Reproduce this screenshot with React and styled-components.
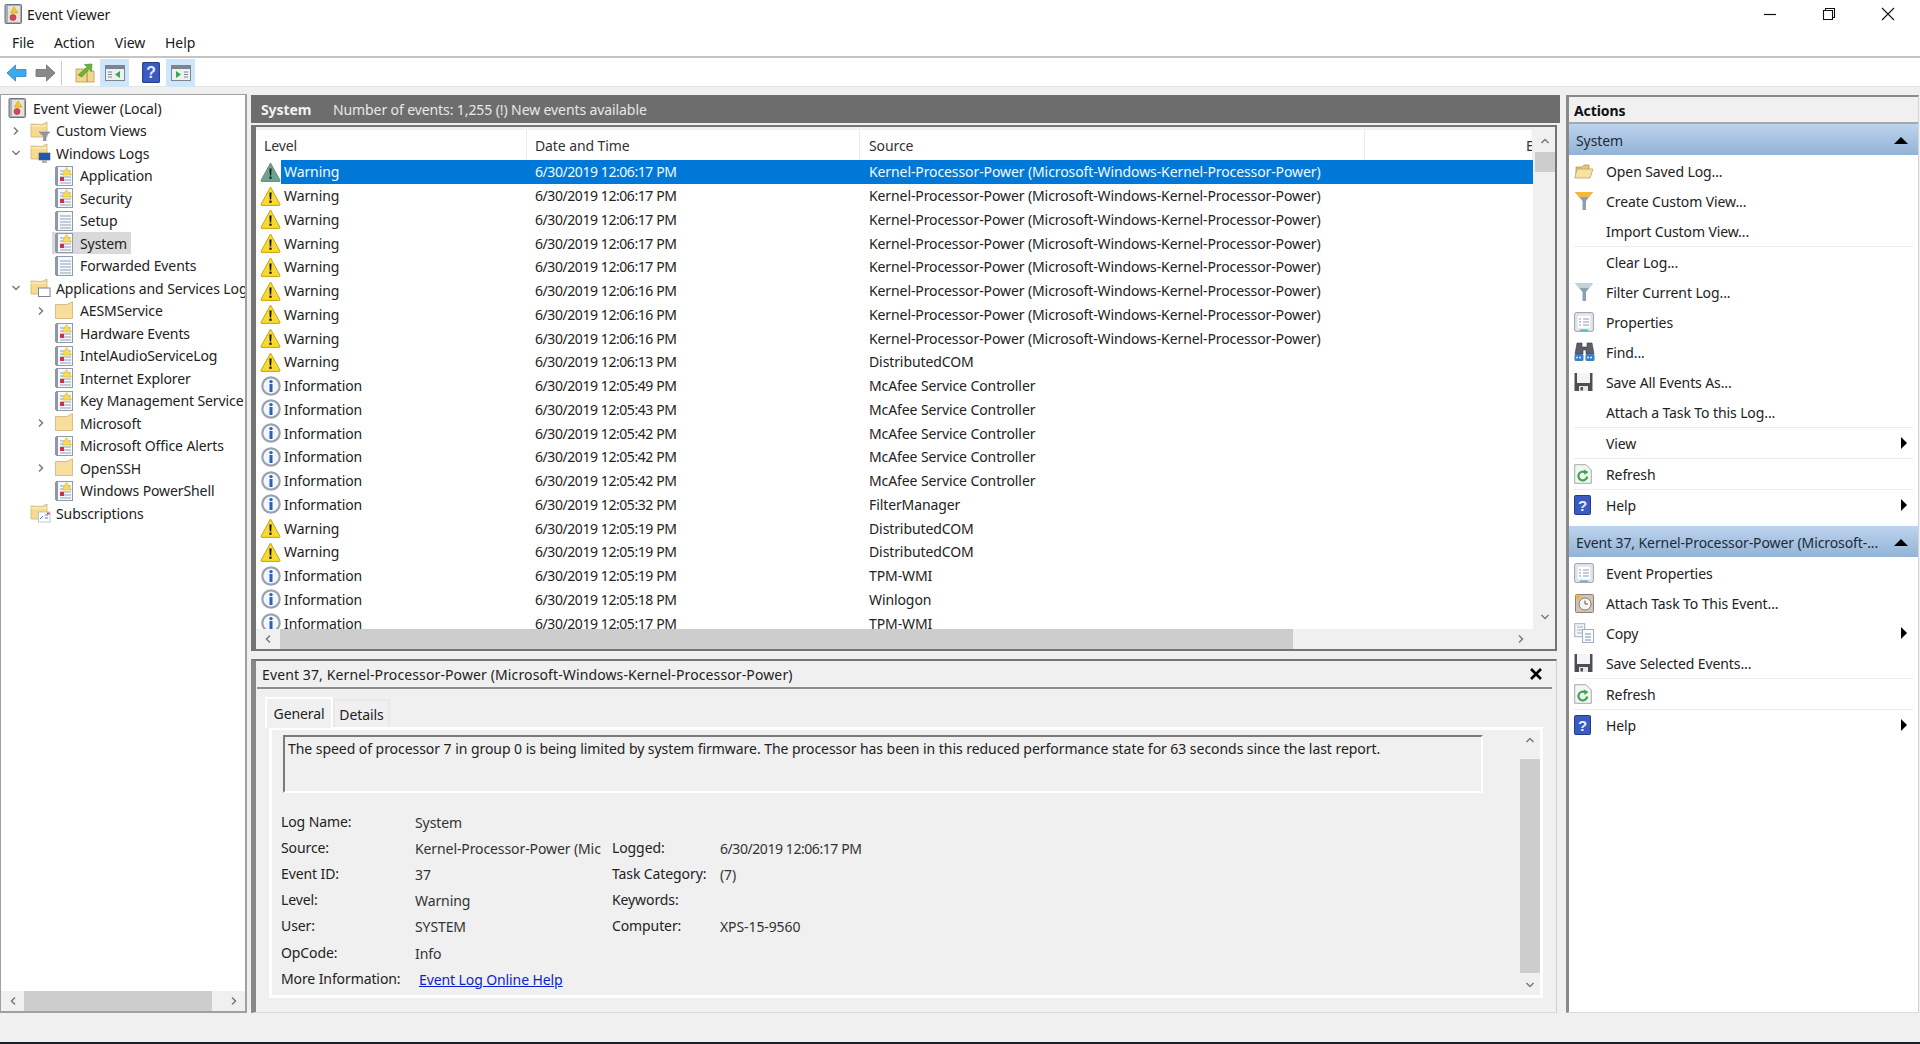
import React from 'react';
import styled, { createGlobalStyle } from 'styled-components';

const GlobalStyle = createGlobalStyle`
  html, body { margin: 0; padding: 0; background: #f0f0f0; }
  body { font-family: "Noto Sans", "Open Sans", sans-serif; font-size: 14px; letter-spacing: -0.1px; color: #222; overflow: hidden; }
  * { box-sizing: border-box; }
`;

const Window = styled.div`
  width: 1920px;
  height: 1044px;
  display: flex;
  flex-direction: column;
  background: #f0f0f0;
  border-bottom: 2px solid #1a2024;
`;

/* title, menu, toolbar */
const TitleBar = styled.div`
  height: 28px;
  background: #fff;
  display: flex;
  align-items: center;
  padding: 0 3px 0 4px;
  color: #1a1a1a;
`;
const TitleText = styled.span`
  flex: 1;
  margin-left: 5px;
`;
const WinButton = styled.div`
  width: 59px;
  height: 28px;
  display: flex;
  align-items: center;
  justify-content: center;
`;
const MenuBar = styled.div`
  height: 30px;
  background: #fff;
  border-bottom: 2px solid #c4c4c4;
  display: flex;
  align-items: center;
  padding-left: 12px;
  gap: 20px;
`;
const MenuItem = styled.span`
  color: #1a1a1a;
`;
const Toolbar = styled.div`
  height: 29px;
  background: #fff;
  border-bottom: 1px solid #e4e4e4;
  display: flex;
  align-items: center;
  padding: 1px 0 0 6px;
`;
const ToolButton = styled.div`
  width: ${p => p.$w || 29}px;
  height: 28px;
  display: flex;
  align-items: center;
  justify-content: center;
  margin-left: ${p => p.$ml || 0}px;
  background: ${p => (p.$on ? '#cde6fa' : 'transparent')};
`;
const ToolSep = styled.div`
  width: 1px;
  height: 24px;
  background: #c8c8c8;
  margin-left: 5px;
`;

const Main = styled.div`
  flex: 1;
  min-height: 0;
  display: flex;
  padding-top: 7px;
`;

/* scrollbars */
const HScroll = styled.div`
  height: 20px;
  flex: none;
  display: flex;
  align-items: center;
  background: #f0f0f0;
`;
const VScroll = styled.div`
  width: 20px;
  flex: none;
  display: flex;
  flex-direction: column;
  align-items: center;
  background: #f0f0f0;
`;
const ArrowBox = styled.div`
  flex: none;
  width: ${p => p.$w || 20}px;
  height: ${p => p.$h || 20}px;
  padding-top: ${p => p.$top || 0}px;
  display: flex;
  align-items: ${p => (p.$top ? 'flex-start' : 'center')};
  justify-content: center;
`;
const HThumb = styled.div`
  height: 20px;
  width: ${p => p.$w}px;
  background: #cdcdcd;
  flex: none;
`;
const VThumb = styled.div`
  width: 20px;
  height: ${p => p.$h}px;
  background: #cdcdcd;
  flex: none;
`;
const Spacer = styled.div`
  flex: 1;
`;

/* tree */
const TreePane = styled.div`
  width: 247px;
  flex: none;
  background: #fff;
  border: 1px solid #a0a0a0;
  border-width: 1px 2px 2px 1px;
  display: flex;
  flex-direction: column;
`;
const TreeBody = styled.div`
  flex: 1;
  padding-top: 2px;
  overflow: hidden;
`;
const TreeRow = styled.div`
  height: 22.5px;
  display: flex;
  align-items: center;
  padding-left: ${p => [4, 7, 32][p.$level]}px;
  white-space: nowrap;
`;
const ChevSlot = styled.div`
  width: 19px;
  flex: none;
  display: flex;
  justify-content: flex-start;
  padding-left: 3px;
`;
const TreeLabel = styled.div`
  height: 22px;
  display: flex;
  align-items: center;
  gap: ${p => [7, 5, 7][p.$level]}px;
  padding: 0 4px 0 3px;
  background: ${p => (p.$on ? '#d9d9d9' : 'transparent')};
  color: #222;
`;

/* center */
const Center = styled.div`
  width: 1309px;
  margin-left: 4px;
  flex: none;
  display: flex;
  flex-direction: column;
`;
const LogHeader = styled.div`
  height: 28px;
  margin-top: 1px;
  background: #6d6d6d;
  color: #e8e8e8;
  display: flex;
  align-items: center;
  padding-left: 10px;
`;
const LogTitle = styled.b`
  font-weight: 700;
  color: #f2f2f2;
  width: 72px;
`;
const ListPane = styled.div`
  width: 1306px;
  height: 526px;
  margin-top: 2px;
  flex: none;
  border: 2px solid #747474;
  border-left-width: 5px;
  padding-top: 3px;
  background: #f0f0f0;
  display: flex;
  flex-direction: column;
`;
const ListMain = styled.div`
  flex: 1;
  min-height: 0;
  display: flex;
  gap: 2px;
`;
const ListTable = styled.div`
  width: 1277px;
  background: #fff;
  overflow: hidden;
`;
const HeaderRow = styled.div`
  height: 30px;
  display: grid;
  grid-template-columns: 271px 333px 505px 168px;
  color: #333;
`;
const HeaderCell = styled.div`
  padding-left: ${p => p.$pad}px;
  border-right: 1px solid #ececec;
  display: flex;
  align-items: center;
  overflow: hidden;
  white-space: nowrap;
`;
const EventRow = styled.div`
  height: 23.75px;
  display: grid;
  grid-template-columns: 25px 246px 333px 505px 168px;
  align-items: stretch;
  color: #222;
`;
const IconCell = styled.div`
  display: flex;
  align-items: center;
  justify-content: center;
  padding-left: 4px;
`;
const Cell = styled.div`
  padding-left: ${p => p.$pad}px;
  display: flex;
  align-items: center;
  white-space: nowrap;
  background: ${p => (p.$sel ? '#0078d7' : 'transparent')};
  color: ${p => (p.$sel ? '#f4faff' : 'inherit')};
`;
const DateText = styled.span`
  letter-spacing: -0.43px;
`;

/* detail */
const DetailPane = styled.div`
  width: 1306px;
  flex: 1;
  margin-top: 8px;
  min-height: 0;
  border-top: 2px solid #747474;
  border-left: 5px solid #888;
  border-right: 1px solid #d0d0d0;
  border-bottom: 1px solid #dcdcdc;
  display: flex;
  flex-direction: column;
`;
const DetailTitle = styled.div`
  height: 28px;
  flex: none;
  margin: 0 4px 0 1px;
  border-bottom: 2px solid #8e8e8e;
  display: flex;
  align-items: center;
  justify-content: space-between;
  padding: 0 10px 0 5px;
  letter-spacing: 0.12px;
`;
const Tabs = styled.div`
  display: flex;
  align-items: flex-end;
  height: 30px;
  margin-top: 8px;
  padding-left: 9px;
  flex: none;
`;
const Tab = styled.div`
  height: ${p => (p.$on ? 31 : 28)}px;
  width: ${p => (p.$on ? 68 : 57)}px;
  margin-bottom: ${p => (p.$on ? -1 : 0)}px;
  display: flex;
  align-items: center;
  justify-content: center;
  border: 2px solid ${p => (p.$on ? '#fff' : '#e8e8e8')};
  border-bottom: none;
  background: #f0f0f0;
  position: relative;
  z-index: 1;
  color: #222;
`;
const TabPanel = styled.div`
  width: 1274px;
  height: 271px;
  margin-left: 13px;
  border: 3px solid #fff;
  display: flex;
  flex: none;
`;
const PanelBody = styled.div`
  width: 1248px;
  padding: 5px 0 0 11px;
`;
const MessageBox = styled.div`
  width: 1200px;
  height: 58px;
  border: 2px solid #fff;
  border-top-color: #7a7a7a;
  border-left-color: #7a7a7a;
  padding: 2px 0 0 3px;
  line-height: 20px;
  letter-spacing: -0.05px;
  white-space: nowrap;
  overflow: hidden;
`;
const Fields = styled.div`
  margin: 15px 0 0 -2px;
  display: grid;
  grid-template-columns: 134px 197px 108px 1fr;
  grid-auto-rows: 26.2px;
  align-items: center;
  white-space: nowrap;
`;
const FieldLabel = styled.div`
  color: #222;
`;
const FieldValue = styled.div`
  padding-top: 2px;
  color: #333;
`;
const HelpLink = styled.a`
  color: #0a1fd0;
  text-decoration: underline;
  margin-left: 4px;
`;

/* actions */
const ActionsPane = styled.div`
  width: 353px;
  margin-left: 6px;
  margin-top: 1px;
  flex: none;
  background: #fff;
  border-top: 2px solid #8a8a8a;
  border-left: 3px solid #8a8a8a;
  border-right: 1px solid #d4d4d4;
  border-bottom: 1px solid #dcdcdc;
`;
const ActionsTitle = styled.div`
  height: 27px;
  background: #f0f0f0;
  border-bottom: 2px solid #a8a8a8;
  display: flex;
  align-items: center;
  padding: 2px 0 0 5px;
  font-weight: 700;
  color: #111;
`;
const SectionHead = styled.div`
  height: 31px;
  background: linear-gradient(#bdd4ee, #92b3d7);
  display: flex;
  align-items: center;
  justify-content: space-between;
  padding: 2px 10px 0 7px;
  color: #1f2a36;
  white-space: nowrap;
`;
const SectionList = styled.div`
  padding: 1px 0 6px;
`;
const ActionRow = styled.div`
  height: 30px;
  display: flex;
  align-items: center;
  color: #222;
  padding-right: 11px;
`;
const ActionIcon = styled.div`
  width: 37px;
  padding-left: 5px;
  flex: none;
  display: flex;
  align-items: center;
`;
const ActionLabel = styled.span`
  flex: 1;
`;
const ActionSep = styled.div`
  height: 1px;
  margin: 0 5px;
  background: #ececec;
`;
const SideArrow = styled.div`
  width: 0;
  height: 0;
  border-left: 6px solid #000;
  border-top: 6px solid transparent;
  border-bottom: 6px solid transparent;
`;
const UpArrow = styled.div`
  width: 0;
  height: 0;
  border-left: 7px solid transparent;
  border-right: 7px solid transparent;
  border-bottom: 7px solid #000;
`;

const StatusBar = styled.div`
  height: 29px;
  flex: none;
  background: #f0f0f0;
`;

/* icons */
const Chev = ({ dir = 'right', size = 10, color = '#7a7a7a', w = 1.5 }) => {
  const pts = {
    right: '3,1.5 6.5,5 3,8.5',
    left: '7,1.5 3.5,5 7,8.5',
    up: '1.5,7 5,3.5 8.5,7',
    down: '1.5,3 5,6.5 8.5,3',
  }[dir];
  return (
    <svg width={size} height={size} viewBox="0 0 10 10">
      <polyline points={pts} fill="none" stroke={color} strokeWidth={w} />
    </svg>
  );
};

const WarnIcon = ({ sel }) => (
  <svg width="21" height="20" viewBox="0 0 21 20">
    <path d="M10.5 1 L20 18.4 Q20.2 19.4 19 19.4 L2 19.4 Q.8 19.4 1 18.4 Z" fill={sel ? '#6fa38f' : '#f8d92e'} stroke={sel ? '#5a8f7c' : '#c9a20f'} strokeWidth="1" />
    <path d="M9.4 6.5h2.2l-.4 7h-1.4z" fill={sel ? '#123' : '#111'} />
    <rect x="9.4" y="14.6" width="2.2" height="2.2" fill={sel ? '#123' : '#111'} />
  </svg>
);

const InfoIcon = () => (
  <svg width="20" height="20" viewBox="0 0 20 20">
    <circle cx="10" cy="10" r="8.7" fill="#f2f5fa" stroke="#9aa2b0" strokeWidth="2.2" />
    <circle cx="10" cy="5.6" r="1.7" fill="#2a62b8" />
    <rect x="8.5" y="8" width="3" height="8" fill="#2a62b8" />
  </svg>
);

const LogIcon = ({ plain }) => (
  <svg width="18" height="20" viewBox="0 0 18 20">
    <rect x="1.5" y=".5" width="16" height="19" fill="#f6f8fb" stroke="#8f9aab" />
    <rect x="0" y="1" width="3" height="18" fill="#8d98a8" />
    <path d="M5 5h11M5 8h11M5 11h11M5 14h11M5 17h11" stroke="#8fa2bd" strokeWidth="1" />
    {!plain && <path d="M11.5 1.5 L16.5 9 L7 9 Z" fill="#f9dc55" stroke="#d8b52a" strokeWidth=".6" />}
    {!plain && <rect x="5" y="11" width="4" height="4" fill="#c8324a" />}
  </svg>
);

const RootIcon = () => (
  <svg width="18" height="20" viewBox="0 0 18 20">
    <rect x="1" y=".5" width="16.5" height="19" rx="1" fill="#a6adb8" stroke="#6b7482" />
    <rect x="4" y="2" width="12" height="16" fill="#e9e3d4" />
    <path d="M10 3 L14 9 L6.5 9 Z" fill="#f7c733" stroke="#b98f1a" strokeWidth=".5" />
    <circle cx="9" cy="13.5" r="3" fill="#d6455f" stroke="#a12a40" strokeWidth=".6" />
  </svg>
);

const FolderIcon = ({ overlay }) => (
  <svg width="21" height="20" viewBox="0 0 21 20">
    <path d="M1 3 L1 16 L17 16 L17 1 L12 3.5 Z" fill="#f6da92" stroke="#cdb477" strokeWidth=".8" />
    <path d="M1 5 H17" stroke="#fff1c8" strokeWidth="1" />
    {overlay === 'filter' && <path d="M9 11 H20 L16 15 V20 H13.5 V15 Z" fill="#8d9aa8" stroke="#6f7b88" strokeWidth=".5" />}
    {overlay === 'pc' && (
      <g>
        <rect x="9" y="10" width="11" height="7" fill="#1f56b4" stroke="#4b5a72" strokeWidth=".6" />
        <rect x="12" y="17" width="5" height="3" fill="#a7b0bc" />
      </g>
    )}
    {overlay === 'window' && <rect x="8.5" y="10" width="11.5" height="8.5" fill="#fff" stroke="#7b8696" strokeWidth="1" />}
    {overlay === 'subs' && (
      <g>
        <rect x="8.5" y="9" width="11.5" height="10" fill="#fff" stroke="#b0b8c4" strokeWidth=".8" />
        <path d="M10 16l3-3M15 12h3M15 15h3" stroke="#3c80d0" strokeWidth="1" />
        <rect x="17" y="9.5" width="2.5" height="2" fill="#d8453c" />
      </g>
    )}
  </svg>
);

const PlainFolder = () => (
  <svg width="18" height="20" viewBox="0 0 18 20">
    <path d="M.5 3.5 L.5 17.5 L17.5 17.5 L17.5 .5 L12 3.5 Z" fill="#f8de9c" stroke="#cdb477" strokeWidth=".8" />
  </svg>
);

const ArrowIcon = ({ flip, color, edge }) => (
  <svg width="21" height="18" viewBox="0 0 21 18">
    <path
      d={flip ? 'M20 9 L11.5 1 V5.5 H1 V12.5 H11.5 V17 Z' : 'M1 9 L9.5 1 V5.5 H20 V12.5 H9.5 V17 Z'}
      fill={color}
      stroke={edge}
      strokeWidth=".8"
    />
  </svg>
);

const UpFolderIcon = () => (
  <svg width="20" height="20" viewBox="0 0 20 20">
    <path d="M1 6 H12 V19 H1 Z M12 8 H19 V19 H12 Z" fill="#f3d78a" stroke="#b59a54" strokeWidth=".8" />
    <path d="M3 12 L12 4 L9.5 1.5 L17 1 L16.5 8.5 L14 6 L7 14 Z" fill="#6ab43a" stroke="#4d8a26" strokeWidth=".6" />
  </svg>
);

const PanelIcon = ({ right }) => (
  <svg width="20" height="16" viewBox="0 0 20 16">
    <rect x=".5" y=".5" width="19" height="15" fill="#eef1f4" stroke="#7a8694" />
    <rect x="1" y="1" width="18" height="3" fill="#7a8694" />
    {right ? (
      <g>
        <path d="M5 6 L10 9.5 L5 13 Z" fill="#39a845" />
        <path d="M13 7h4M13 9.5h4M13 12h4" stroke="#7a8694" strokeWidth="1" />
      </g>
    ) : (
      <g>
        <path d="M3 7h4M3 9.5h4M3 12h4" stroke="#7a8694" strokeWidth="1" />
        <path d="M15 6 L10 9.5 L15 13 Z" fill="#39a845" />
      </g>
    )}
  </svg>
);

const HelpIcon = ({ h = 20, w = 17 }) => (
  <svg width={w} height={h} viewBox="0 0 17 20">
    <rect x=".5" y=".5" width="16" height="19" rx="1" fill="#3a5cc0" stroke="#24398a" />
    <text x="8.5" y="15.5" textAnchor="middle" fontSize="15" fontWeight="700" fontFamily="Liberation Sans, sans-serif" fill="#e8ecff">?</text>
  </svg>
);

const OpenFolderIcon = () => (
  <svg width="20" height="18" viewBox="0 0 20 18">
    <path d="M2 5 H8 L10 3 H15 V14 H2 Z" fill="#e8c878" stroke="#a68f55" strokeWidth=".7" />
    <path d="M.8 16 L3 7 H19 L16 16 Z" fill="#f8e2a0" stroke="#b39a5c" strokeWidth=".7" />
  </svg>
);

const FunnelIcon = ({ fill = '#8da0b2', top = '#c4d0da' }) => (
  <svg width="20" height="20" viewBox="0 0 20 20">
    <path d="M1 1 H19 L12 10 V19 H8.5 V10 Z" fill={fill} />
    <path d="M1 1 H19 L15 6 H5 Z" fill={top} />
  </svg>
);

const SheetIcon = () => (
  <svg width="20" height="20" viewBox="0 0 20 20">
    <rect x=".7" y=".7" width="18.6" height="18.6" rx="1.5" fill="#eef0f3" stroke="#8d96a3" />
    <rect x="3" y="3" width="14" height="14" fill="#fff" stroke="#c4cad2" strokeWidth=".7" />
    <path d="M5 7h2M9 7h6M5 10h2M9 10h6M5 13h2M9 13h6" stroke="#8d9bb0" strokeWidth="1" />
    <rect x="6" y="17.5" width="8" height="1.4" fill="#46b0c4" />
  </svg>
);

const BinocularsIcon = () => (
  <svg width="21" height="20" viewBox="0 0 21 20">
    <path d="M3 1 h5 v4 h5 v-4 h5 l2 11 h-8 v-4 h-3 v4 h-8 z" fill="#5a5f68" stroke="#3a3e45" strokeWidth=".6" />
    <rect x=".5" y="12" width="9" height="7" rx="1.5" fill="#3d7fc0" />
    <rect x="11.5" y="12" width="9" height="7" rx="1.5" fill="#3d7fc0" />
    <path d="M2 15.5h6M13 15.5h6" stroke="#dceaf8" strokeWidth="1.5" strokeDasharray="2 1" />
  </svg>
);

const SaveIcon = () => (
  <svg width="19" height="20" viewBox="0 0 19 20">
    <path d="M.5 1 H18.5 V19 H.5 Z" fill="#4c5055" />
    <rect x="3" y="1" width="13" height="10" fill="#f4f4f4" />
    <rect x="5" y="14" width="9" height="5" fill="#e8e8e8" />
    <rect x="6.5" y="15" width="2.5" height="3.5" fill="#4c5055" />
  </svg>
);

const RefreshIcon = () => (
  <svg width="18" height="20" viewBox="0 0 18 20">
    <path d="M.7.7 H12 L17.3 6 V19.3 H.7 Z" fill="#f3f5f4" stroke="#a3aaa6" />
    <path d="M13.2 12.5 A4.4 4.4 0 1 1 11.5 8.5" fill="none" stroke="#3aa84a" strokeWidth="2.2" />
    <path d="M10 5.5 L14.5 8 L10.5 11 Z" fill="#3aa84a" />
  </svg>
);

const ClockIcon = () => (
  <svg width="20" height="20" viewBox="0 0 20 20">
    <rect x="1.5" y="1.5" width="18" height="18" rx="1" fill="#cfc4b6" stroke="#8b8073" />
    <circle cx="11" cy="11" r="6" fill="#f6f6f4" stroke="#8b7d6d" />
    <path d="M11 7.5 V11 H14" fill="none" stroke="#555" strokeWidth="1" />
    <path d="M4 0 L5.2 3 L8 4 L5.2 5 L4 8 L2.8 5 L0 4 L2.8 3 Z" fill="#f6b420" />
  </svg>
);

const CopyIcon = () => (
  <svg width="20" height="20" viewBox="0 0 20 20">
    <rect x=".7" y=".7" width="10" height="13" fill="#f3f5f8" stroke="#a3adbb" />
    <path d="M3 4h6M3 7h6M3 10h6" stroke="#9eb0ca" />
    <rect x="8.5" y="6.5" width="11" height="13" fill="#fbfcfd" stroke="#a3adbb" />
    <path d="M11 11h6M11 14h6M11 17h6" stroke="#6f90c0" />
  </svg>
);

const treeItems = [
  { level: 0, icon: <RootIcon />, text: 'Event Viewer (Local)' },
  { level: 1, chev: 'right', icon: <FolderIcon overlay="filter" />, text: 'Custom Views' },
  { level: 1, chev: 'down', icon: <FolderIcon overlay="pc" />, text: 'Windows Logs' },
  { level: 2, icon: <LogIcon />, text: 'Application' },
  { level: 2, icon: <LogIcon />, text: 'Security' },
  { level: 2, icon: <LogIcon plain />, text: 'Setup' },
  { level: 2, icon: <LogIcon />, text: 'System', on: true },
  { level: 2, icon: <LogIcon plain />, text: 'Forwarded Events' },
  { level: 1, chev: 'down', icon: <FolderIcon overlay="window" />, text: 'Applications and Services Logs' },
  { level: 2, chev: 'right', icon: <PlainFolder />, text: 'AESMService' },
  { level: 2, icon: <LogIcon />, text: 'Hardware Events' },
  { level: 2, icon: <LogIcon />, text: 'IntelAudioServiceLog' },
  { level: 2, icon: <LogIcon />, text: 'Internet Explorer' },
  { level: 2, icon: <LogIcon />, text: 'Key Management Service' },
  { level: 2, chev: 'right', icon: <PlainFolder />, text: 'Microsoft' },
  { level: 2, icon: <LogIcon />, text: 'Microsoft Office Alerts' },
  { level: 2, chev: 'right', icon: <PlainFolder />, text: 'OpenSSH' },
  { level: 2, icon: <LogIcon />, text: 'Windows PowerShell' },
  { level: 1, icon: <FolderIcon overlay="subs" />, text: 'Subscriptions' },
];

const KPP = 'Kernel-Processor-Power (Microsoft-Windows-Kernel-Processor-Power)';
const MCA = 'McAfee Service Controller';
const events = [
  ['W', '12:06:17', KPP],
  ['W', '12:06:17', KPP],
  ['W', '12:06:17', KPP],
  ['W', '12:06:17', KPP],
  ['W', '12:06:17', KPP],
  ['W', '12:06:16', KPP],
  ['W', '12:06:16', KPP],
  ['W', '12:06:16', KPP],
  ['W', '12:06:13', 'DistributedCOM'],
  ['I', '12:05:49', MCA],
  ['I', '12:05:43', MCA],
  ['I', '12:05:42', MCA],
  ['I', '12:05:42', MCA],
  ['I', '12:05:42', MCA],
  ['I', '12:05:32', 'FilterManager'],
  ['W', '12:05:19', 'DistributedCOM'],
  ['W', '12:05:19', 'DistributedCOM'],
  ['I', '12:05:19', 'TPM-WMI'],
  ['I', '12:05:18', 'Winlogon'],
  ['I', '12:05:17', 'TPM-WMI'],
];

const logActions = [
  { icon: <OpenFolderIcon />, text: 'Open Saved Log...' },
  { icon: <FunnelIcon fill="#8da0b2" top="#f6b83a" />, text: 'Create Custom View...' },
  { text: 'Import Custom View...' },
  { sep: true },
  { text: 'Clear Log...' },
  { icon: <FunnelIcon />, text: 'Filter Current Log...' },
  { icon: <SheetIcon />, text: 'Properties' },
  { icon: <BinocularsIcon />, text: 'Find...' },
  { icon: <SaveIcon />, text: 'Save All Events As...' },
  { text: 'Attach a Task To this Log...' },
  { sep: true },
  { text: 'View', arrow: true },
  { sep: true },
  { icon: <RefreshIcon />, text: 'Refresh' },
  { sep: true },
  { icon: <HelpIcon />, text: 'Help', arrow: true },
];

const eventActions = [
  { icon: <SheetIcon />, text: 'Event Properties' },
  { icon: <ClockIcon />, text: 'Attach Task To This Event...' },
  { icon: <CopyIcon />, text: 'Copy', arrow: true },
  { icon: <SaveIcon />, text: 'Save Selected Events...' },
  { sep: true },
  { icon: <RefreshIcon />, text: 'Refresh' },
  { sep: true },
  { icon: <HelpIcon />, text: 'Help', arrow: true },
];

const ActionSection = ({ title, items }) => (
  <>
    <SectionHead>
      <span>{title}</span>
      <UpArrow />
    </SectionHead>
    <SectionList>
      {items.map((a, i) =>
        a.sep ? (
          <ActionSep key={i} />
        ) : (
          <ActionRow key={i}>
            <ActionIcon>{a.icon}</ActionIcon>
            <ActionLabel>{a.text}</ActionLabel>
            {a.arrow && <SideArrow />}
          </ActionRow>
        )
      )}
    </SectionList>
  </>
);

const App = () => (
  <Window>
    <GlobalStyle />
    <TitleBar>
      <RootIcon />
      <TitleText>Event Viewer</TitleText>
      <WinButton>
        <svg width="14" height="14" viewBox="0 0 14 14"><path d="M1 7.5H13" stroke="#111" strokeWidth="1.2" /></svg>
      </WinButton>
      <WinButton>
        <svg width="14" height="14" viewBox="0 0 14 14"><path d="M1.5 3.5H10.5V12.5H1.5Z M3.5 3.5V1.5H12.5V10.5H10.5" fill="none" stroke="#111" strokeWidth="1.1" /></svg>
      </WinButton>
      <WinButton>
        <svg width="14" height="14" viewBox="0 0 14 14"><path d="M1 1L13 13M13 1L1 13" stroke="#111" strokeWidth="1.1" /></svg>
      </WinButton>
    </TitleBar>
    <MenuBar>
      <MenuItem>File</MenuItem>
      <MenuItem>Action</MenuItem>
      <MenuItem>View</MenuItem>
      <MenuItem>Help</MenuItem>
    </MenuBar>
    <Toolbar>
      <ArrowIcon color="#3fa8ea" edge="#2a86c8" />
      <ToolButton $w={21} $ml={8}><ArrowIcon flip color="#8a8a8a" edge="#6e6e6e" /></ToolButton>
      <ToolSep />
      <ToolButton $w={20} $ml={13}><UpFolderIcon /></ToolButton>
      <ToolButton $on $ml={5}><PanelIcon /></ToolButton>
      <ToolButton $w={19} $ml={12}><HelpIcon h={21} w={18} /></ToolButton>
      <ToolButton $on $ml={6}><PanelIcon right /></ToolButton>
    </Toolbar>

    <Main>
      <TreePane>
        <TreeBody>
          {treeItems.map(t => (
            <TreeRow key={t.text} $level={t.level}>
              {t.level > 0 && <ChevSlot>{t.chev && <Chev dir={t.chev} />}</ChevSlot>}
              <TreeLabel $on={t.on} $level={t.level}>
                {t.icon}
                <span>{t.text}</span>
              </TreeLabel>
            </TreeRow>
          ))}
        </TreeBody>
        <HScroll>
          <ArrowBox $w={23}><Chev dir="left" /></ArrowBox>
          <HThumb $w={188} />
          <Spacer />
          <ArrowBox $w={23}><Chev dir="right" /></ArrowBox>
        </HScroll>
      </TreePane>

      <Center>
        <LogHeader>
          <LogTitle>System</LogTitle>
          <span>Number of events: 1,255 (!) New events available</span>
        </LogHeader>
        <ListPane>
          <ListMain>
            <ListTable>
              <HeaderRow>
                <HeaderCell $pad={8}>Level</HeaderCell>
                <HeaderCell $pad={8}>Date and Time</HeaderCell>
                <HeaderCell $pad={9}>Source</HeaderCell>
                <HeaderCell $pad={161}>Event ID</HeaderCell>
              </HeaderRow>
              {events.map(([kind, time, source], i) => (
                <EventRow key={i}>
                  <IconCell>{kind === 'W' ? <WarnIcon sel={i === 0} /> : <InfoIcon />}</IconCell>
                  <Cell $pad={3} $sel={i === 0}>{kind === 'W' ? 'Warning' : 'Information'}</Cell>
                  <Cell $pad={8} $sel={i === 0}><DateText>6/30/2019 {time} PM</DateText></Cell>
                  <Cell $pad={9} $sel={i === 0}>{source}</Cell>
                  <Cell $pad={0} $sel={i === 0} />
                </EventRow>
              ))}
            </ListTable>
            <VScroll>
              <ArrowBox $h={22}><Chev dir="up" /></ArrowBox>
              <VThumb $h={20} />
              <Spacer />
              <ArrowBox $h={24}><Chev dir="down" /></ArrowBox>
            </VScroll>
          </ListMain>
          <HScroll>
            <ArrowBox $w={24}><Chev dir="left" /></ArrowBox>
            <HThumb $w={1013} />
            <Spacer />
            <ArrowBox $w={20}><Chev dir="right" /></ArrowBox>
            <ArrowBox $w={24} />
          </HScroll>
        </ListPane>

        <DetailPane>
          <DetailTitle>
            <span>Event 37, Kernel-Processor-Power (Microsoft-Windows-Kernel-Processor-Power)</span>
            <svg width="12" height="12" viewBox="0 0 12 12"><path d="M1 1L11 11M11 1L1 11" stroke="#000" strokeWidth="2.6" /></svg>
          </DetailTitle>
          <Tabs>
            <Tab $on>General</Tab>
            <Tab>Details</Tab>
          </Tabs>
          <TabPanel>
            <PanelBody>
              <MessageBox>
                The speed of processor 7 in group 0 is being limited by system firmware. The processor has been in this reduced performance state for 63 seconds since the last report.
              </MessageBox>
              <Fields>
                <FieldLabel>Log Name:</FieldLabel>
                <FieldValue>System</FieldValue>
                <span />
                <span />
                <FieldLabel>Source:</FieldLabel>
                <FieldValue>Kernel-Processor-Power (Mic</FieldValue>
                <FieldLabel>Logged:</FieldLabel>
                <FieldValue><DateText>6/30/2019 12:06:17 PM</DateText></FieldValue>
                <FieldLabel>Event ID:</FieldLabel>
                <FieldValue>37</FieldValue>
                <FieldLabel>Task Category:</FieldLabel>
                <FieldValue>(7)</FieldValue>
                <FieldLabel>Level:</FieldLabel>
                <FieldValue>Warning</FieldValue>
                <FieldLabel>Keywords:</FieldLabel>
                <span />
                <FieldLabel>User:</FieldLabel>
                <FieldValue>SYSTEM</FieldValue>
                <FieldLabel>Computer:</FieldLabel>
                <FieldValue>XPS-15-9560</FieldValue>
                <FieldLabel>OpCode:</FieldLabel>
                <FieldValue>Info</FieldValue>
                <span />
                <span />
                <FieldLabel>More Information:</FieldLabel>
                <FieldValue><HelpLink href="#">Event Log Online Help</HelpLink></FieldValue>
              </Fields>
            </PanelBody>
            <VScroll>
              <ArrowBox $h={29} $top={5}><Chev dir="up" /></ArrowBox>
              <VThumb $h={214} />
              <Spacer />
              <ArrowBox $h={20}><Chev dir="down" /></ArrowBox>
            </VScroll>
          </TabPanel>
        </DetailPane>
      </Center>

      <ActionsPane>
        <ActionsTitle>Actions</ActionsTitle>
        <ActionSection title="System" items={logActions} />
        <ActionSection title="Event 37, Kernel-Processor-Power (Microsoft-..." items={eventActions} />
      </ActionsPane>
    </Main>
    <StatusBar />
  </Window>
);

export default App;
